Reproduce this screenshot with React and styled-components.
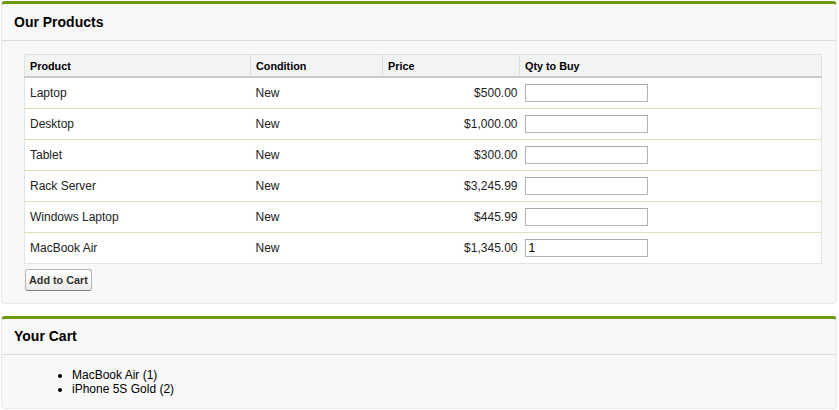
import React from "react";
import styled, { createGlobalStyle } from "styled-components";

const Global = createGlobalStyle`
  html, body { margin: 0; padding: 0; background: #fff; }
  body { font-family: Arial, "Liberation Sans", Helvetica, sans-serif; font-size: 12px; color: #222; }
  #root { padding: 1px 2px 0 1px; }
`;

const Panel = styled.section`
  background: #f8f8f8;
  border: 1px solid #eaeaea;
  border-top: 3px solid #6c9a12;
  border-radius: 4px;
  margin-bottom: ${(p) => p.$gap || 0}px;
`;

const Header = styled.div`
  height: ${(p) => p.$h || 35}px;
  display: flex;
  align-items: center;
  padding-left: 12px;
  border-bottom: 1px solid #dbdbdb;
`;

const Title = styled.h2`
  margin: 0;
  font-size: 14px;
  font-weight: bold;
  color: #000;
`;

const Body = styled.div`
  padding: ${(p) => p.$pad};
`;

const Table = styled.table`
  width: 100%;
  border-collapse: collapse;
  background: #fff;
  border: 1px solid #e0e3e5;
  table-layout: fixed;
`;

const Th = styled.th`
  background: #f2f3f3;
  border-bottom: 2px solid #cccccc;
  border-left: ${(p) => (p.$first ? "none" : "1px solid #dedede")};
  text-align: left;
  font-size: 10.8px;
  font-weight: bold;
  color: #000;
  height: 22px;
  padding: 1px 2px 0 5px;
  box-sizing: border-box;
`;

const Td = styled.td`
  height: 30px;
  padding: 0 2px 0 5px;
  border-bottom: ${(p) => (p.$last ? "none" : "1px solid #e3deb8")};
  text-align: ${(p) => (p.$right ? "right" : "left")};
  font-size: 12px;
  color: #222;
  vertical-align: middle;
`;

const QtyInput = styled.input`
  display: block;
  width: 123px;
  height: 18px;
  box-sizing: border-box;
  border: 1px solid #b3b3b3;
  border-top-color: #a8a8a8;
  padding: 0 3px;
  margin-top: 1px;
  font-family: Arial, "Liberation Sans", sans-serif;
  font-size: 12px;
  color: #000;
  background: #fff;
  outline: none;
`;

const Button = styled.button`
  margin-top: 5px;
  margin-left: 1px;
  height: 22px;
  padding: 0 3px;
  border: 1px solid #b5b5b5;
  border-bottom-color: #7f7f7f;
  border-radius: 3px;
  background: linear-gradient(#ffffff, #ececec);
  font-family: Arial, "Liberation Sans", sans-serif;
  font-size: 10.8px;
  font-weight: bold;
  color: #333;
  cursor: pointer;
`;

const CartList = styled.ul`
  margin: 0;
  padding-left: 56px;
  list-style: disc;
  line-height: 14px;
  font-size: 12px;
  color: #000;
`;

const products = [
  ["Laptop", "New", "$500.00", ""],
  ["Desktop", "New", "$1,000.00", ""],
  ["Tablet", "New", "$300.00", ""],
  ["Rack Server", "New", "$3,245.99", ""],
  ["Windows Laptop", "New", "$445.99", ""],
  ["MacBook Air", "New", "$1,345.00", "1"],
];

export default function App() {
  return (
    <>
      <Global />
      <Panel $gap={12}>
        <Header $h={36}>
          <Title>Our Products</Title>
        </Header>
        <Body $pad="13px 14px 12px 22px">
          <Table>
            <colgroup>
              <col style={{ width: 226 }} />
              <col style={{ width: 132 }} />
              <col style={{ width: 137 }} />
              <col />
            </colgroup>
            <thead>
              <tr>
                <Th $first>Product</Th>
                <Th>Condition</Th>
                <Th>Price</Th>
                <Th>Qty to Buy</Th>
              </tr>
            </thead>
            <tbody>
              {products.map((p, i) => {
                const last = i === products.length - 1;
                return (
                  <tr key={p[0]}>
                    <Td $last={last}>{p[0]}</Td>
                    <Td $last={last}>{p[1]}</Td>
                    <Td $last={last} $right>{p[2]}</Td>
                    <Td $last={last}>
                      <QtyInput defaultValue={p[3]} />
                    </Td>
                  </tr>
                );
              })}
            </tbody>
          </Table>
          <Button>Add to Cart</Button>
        </Body>
      </Panel>
      <Panel>
        <Header $h={35}>
          <Title>Your Cart</Title>
        </Header>
        <Body $pad="13px 14px 12px 14px">
          <CartList>
            <li>MacBook Air (1)</li>
            <li>iPhone 5S Gold (2)</li>
          </CartList>
        </Body>
      </Panel>
    </>
  );
}
